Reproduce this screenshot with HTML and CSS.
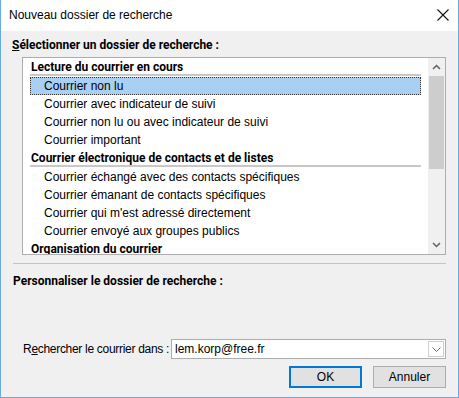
FILE: index.html
```html
<!doctype html>
<html lang="fr">
	<head>
		<meta charset="UTF-8" />
		<title>Nouveau dossier de recherche</title>
		<link rel="stylesheet" href="styles.css">
	</head>
	<body>
		<div class="window">
			<div class="titlebar">
				<span class="title">Nouveau dossier de recherche</span>
				<svg class="close" width="12" height="12" viewBox="0 0 12 12">
					<path d="M0.5 0.5 L11.5 11.5 M11.5 0.5 L0.5 11.5" stroke="#111" stroke-width="1.1" fill="none"/>
				</svg>
			</div>
			<div class="content">
				<div class="label"><u>S</u>électionner un dossier de recherche :</div>

				<div class="listbox">
					<div class="items">
						<div class="group">Lecture du courrier en cours</div>
						<div class="item selected">Courrier non lu</div>
						<div class="item">Courrier avec indicateur de suivi</div>
						<div class="item">Courrier non lu ou avec indicateur de suivi</div>
						<div class="item">Courrier important</div>
						<div class="group">Courrier électronique de contacts et de listes</div>
						<div class="item">Courrier échangé avec des contacts spécifiques</div>
						<div class="item">Courrier émanant de contacts spécifiques</div>
						<div class="item">Courrier qui m'est adressé directement</div>
						<div class="item">Courrier envoyé aux groupes publics</div>
						<div class="group">Organisation du courrier</div>
					</div>
					<div class="scrollbar">
						<div class="arrow">
							<svg width="9" height="6" viewBox="0 0 9 6"><path d="M1 5 L4.5 1.5 L8 5" stroke="#606060" stroke-width="1.5" fill="none"/></svg>
						</div>
						<div class="track"><div class="thumb"></div></div>
						<div class="arrow">
							<svg width="9" height="6" viewBox="0 0 9 6"><path d="M1 1 L4.5 4.5 L8 1" stroke="#606060" stroke-width="1.5" fill="none"/></svg>
						</div>
					</div>
				</div>

				<div class="separator"></div>

				<div class="label custom">Personnaliser le dossier de recherche :</div>

				<div class="search-row">
					<span class="search-label">R<u>e</u>chercher le courrier dans :</span>
					<div class="combo">
						<span class="combo-value">lem.korp@free.fr</span>
						<span class="combo-button">
							<svg width="9" height="5" viewBox="0 0 9 5"><path d="M0.5 0.5 L4.5 4.5 L8.5 0.5" stroke="#707070" stroke-width="1" fill="none"/></svg>
						</span>
					</div>
				</div>

				<div class="buttons">
					<button class="btn default">OK</button>
					<button class="btn">Annuler</button>
				</div>
			</div>
		</div>
	</body>
</html>
```

FILE: styles.css
```css
html, body {
	margin: 0;
	padding: 0;
}
body {
	font-family: "Liberation Sans", Arial, sans-serif;
	font-size: 12px;
	color: #000;
	background: #f0f0f0;
}
.window {
	width: 459px;
	height: 398px;
	box-sizing: border-box;
	border: 1px solid #6aaae2;
	border-top: none;
	background: #f0f0f0;
	display: flex;
	flex-direction: column;
}
.titlebar {
	height: 31px;
	background: #fff;
	display: flex;
	align-items: center;
	justify-content: space-between;
	padding: 0 9px 0 8px;
	flex-shrink: 0;
}
.title {
	font-size: 12px;
	margin-top: -1px;
}
.close {
	margin-top: -2px;
}
.content {
	padding: 0 12px 0 11px;
}
.label {
	font-family: Roboto, "Liberation Sans", sans-serif;
	font-weight: bold;
	line-height: 16px;
	margin-top: 6px;
}
u {
	text-decoration: underline;
	text-underline-offset: 1px;
}
.listbox {
	margin: 4px 0 0 10px;
	height: 198px;
	box-sizing: border-box;
	border: 1px solid #adadad;
	background: #fff;
	display: flex;
	overflow: hidden;
}
.items {
	flex: 1;
	padding: 0 7px;
}
.group {
	font-family: Roboto, "Liberation Sans", sans-serif;
	font-weight: bold;
	height: 16px;
	line-height: 18px;
	padding-left: 1px;
	border-bottom: 2px solid #c8c8c8;
	margin-bottom: 1px;
}
.item {
	height: 18px;
	line-height: 18px;
	padding-left: 14px;
	box-sizing: border-box;
}
.item.selected {
	background: #a9d0f2;
	outline: 1px dotted #333;
	outline-offset: -1px;
}
.scrollbar {
	width: 17px;
	background: #f0f0f0;
	display: flex;
	flex-direction: column;
}
.arrow {
	height: 18px;
	display: flex;
	align-items: center;
	justify-content: center;
}
.track {
	flex: 1;
}
.thumb {
	height: 93px;
	margin: 0 1px;
	background: #cdcdcd;
}
.separator {
	height: 1px;
	background: #c4c4c4;
	margin-top: 8px;
	margin-left: 1px;
}
.label.custom {
	margin-top: 9px;
	margin-left: 1px;
}
.search-row {
	display: flex;
	align-items: center;
	justify-content: space-between;
	margin-top: 50px;
	padding-left: 11px;
}
.search-label {
	white-space: nowrap;
	letter-spacing: -0.3px;
}
.combo {
	width: 275px;
	flex-shrink: 0;
	height: 20px;
	box-sizing: border-box;
	border: 1px solid #adadad;
	background: #fff;
	display: flex;
	align-items: center;
	justify-content: space-between;
	padding-left: 3px;
}
.combo-button {
	width: 16px;
	height: 16px;
	margin-right: 1px;
	box-sizing: border-box;
	border: 1px solid #cfcfcf;
	display: flex;
	align-items: center;
	justify-content: center;
}
.buttons {
	display: flex;
	justify-content: flex-end;
	gap: 11px;
	margin-top: 7px;
}
.btn {
	width: 73px;
	height: 22px;
	box-sizing: border-box;
	border: 1px solid #adadad;
	background: #e1e1e1;
	font-family: "Liberation Sans", Arial, sans-serif;
	font-size: 12px;
	color: #000;
	padding: 0;
}
.btn.default {
	border: 2px solid #0078d7;
}
```
